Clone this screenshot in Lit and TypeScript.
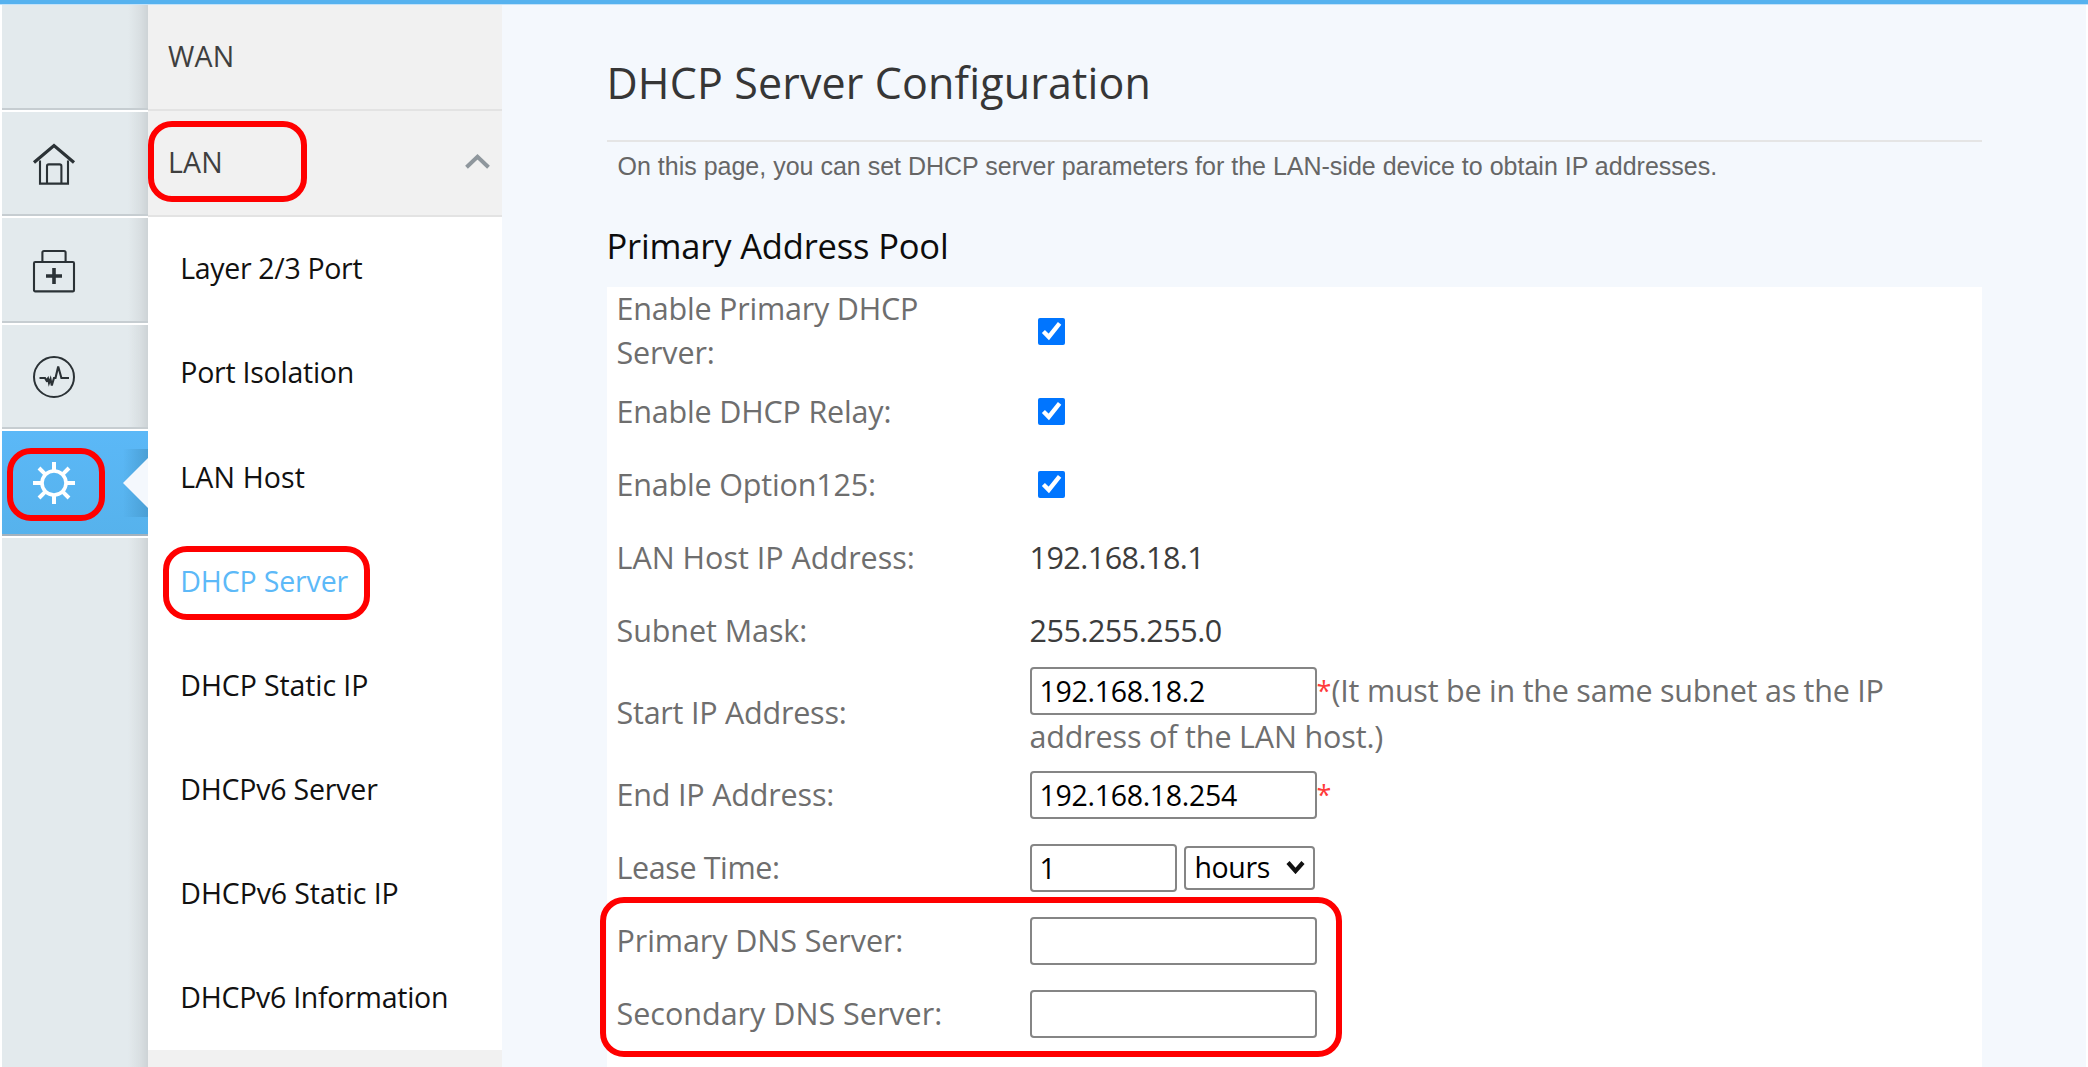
import { LitElement, html, css, svg, nothing } from "lit";
import { customElement } from "lit/decorators.js";
import { classMap } from "lit/directives/class-map.js";
import { styleMap } from "lit/directives/style-map.js";

const homeIcon = svg`<svg class="glyph" viewBox="0 0 42 42" fill="none" stroke="#2b3236">
  <path d="M1 19.5 21 2.5 41 19.5" stroke-width="3.2"/>
  <path d="M7 17.5V40.6H35V17.5" stroke-width="2.1"/>
  <path d="M14 40.6V23.2Q14 21.4 15.8 21.4H26.6Q28.4 21.4 28.4 23.2V40.6" stroke-width="2.1"/>
</svg>`;

const kitIcon = svg`<svg class="glyph" viewBox="0 0 42 42" fill="none" stroke="#2b3236" stroke-width="2.1">
  <rect x="1" y="12" width="40" height="29.4" rx="1.2"/>
  <path d="M9.4 12V2.6Q9.4 1 11 1H31Q32.6 1 32.6 2.6V12"/>
  <path d="M21 18V34M13 26H29" stroke-width="3.6"/>
</svg>`;

const pulseIcon = svg`<svg class="glyph" viewBox="0 0 42 42" fill="none" stroke="#2b3236">
  <circle cx="21" cy="21" r="20" stroke-width="2"/>
  <path d="M6.5 22H12L13.5 24.5 15 22.5 16 27 17.5 23 18.8 29.5 21 22H22.5L25.2 10.5 28.4 22H36" stroke-width="2.1"/>
</svg>`;

const gearIcon = svg`<svg class="glyph" viewBox="0 0 42 42" fill="none" stroke="#fff" stroke-width="4">
  <circle cx="21" cy="21" r="12" stroke-width="3.6"/>
  <path d="M21 0V9M21 33V42M0 21H9M33 21H42M6 6 12.4 12.4M29.6 29.6 36 36M36 6 29.6 12.4M12.4 29.6 6 36"/>
</svg>`;

const rail = [
  { icon: nothing, active: false },
  { icon: homeIcon, active: false },
  { icon: kitIcon, active: false },
  { icon: pulseIcon, active: false },
  { icon: gearIcon, active: true },
];

/* Each entry pairs the text with its letter tracking in px. */
const submenu: [string, number][] = [
  ["Layer 2/3 Port", -0.33],
  ["Port Isolation", -0.25],
  ["LAN Host", 0.15],
  ["DHCP Server", -0.15],
  ["DHCP Static IP", -0.1],
  ["DHCPv6 Server", -0.2],
  ["DHCPv6 Static IP", -0.1],
  ["DHCPv6 Information", -0.27],
];

const text = (s: string, tracking = 0) =>
  html`<span style=${styleMap({ letterSpacing: `${tracking}px` })}>${s}</span>`;

@customElement("app-root")
export class AppRoot extends LitElement {
  static styles = css`
    :host {
      display: block;
      width: 2088px;
      height: 1067px;
      overflow: hidden;
      font-family: "Open Sans", "Noto Sans", sans-serif;
      background: #fff;
    }
    * { box-sizing: border-box; }
    .page { position: relative; height: 1067px; display: flex; flex-direction: column; }
    .topbar { flex: none; height: 5px; background: #56b2ef; border-bottom: 1px solid #c3e2f9; }
    .body { flex: 1; min-height: 0; display: flex; padding: 0 2px; }

    .rail { width: 146px; flex: none; display: flex; flex-direction: column; }
    .cell {
      position: relative;
      height: 106.4px;
      flex: none;
      padding: 0 0 0 31px;
      display: flex;
      align-items: center;
      border-bottom: 2px solid #fff;
      background: linear-gradient(to right, transparent 126px, #d9dfe2 138px, #cdd3d6 146px), #e3eaed;
      box-shadow: inset 0 -2px 0 #c6cdd1;
    }
    .cell:first-child { height: 107px; }
    .cell.active {
      background: linear-gradient(#5bb8f7, #56b2ec);
      box-shadow: inset 0 -2px 0 #a4b2bd;
    }
    .cell.rest { flex: 1; border: 0; box-shadow: none; }
    .glyph { width: 42px; height: 42px; display: block; overflow: visible; }
    .notch { position: absolute; right: 0; top: 18px; width: 25px; height: 68px; }

    .menu { width: 354px; flex: none; background: #f1f1f1; font-size: 28.5px; display: flex; flex-direction: column; }
    .head {
      height: 105.5px;
      flex: none;
      display: flex;
      align-items: center;
      justify-content: space-between;
      padding: 0 12px 2px 20px;
      color: #3f3f3f;
      border-bottom: 2px solid #e3e3e3;
      letter-spacing: 0.2px;
    }
    .head + .head { height: 106.5px; }
    .chev { width: 25px; height: 15px; }
    .items { background: #fff; }
    .item { height: 104.17px; display: flex; align-items: center; padding: 0 0 1.5px 32.3px; color: #111; white-space: nowrap; }
    .item.on { color: #5cb9f8; }

    .main { flex: 1; background: #f4f8fd; padding: 0 104.5px 0 104.5px; display: flex; flex-direction: column; }
    .title { height: 137px; padding-top: 42.5px; line-height: 70px; font-size: 43px; letter-spacing: 0.14px; color: #363636; border-bottom: 2px solid #e5e5e5; white-space: nowrap; }
    .desc { height: 67px; padding: 4px 0 0 11px; font: 25px/40px "Liberation Sans", Arial, sans-serif; color: #666; white-space: nowrap; }
    .sub { height: 78px; line-height: 73px; font-size: 34.5px; letter-spacing: -0.17px; color: #0c0c0c; white-space: nowrap; }
    .form { flex: 1; background: #fff; font-size: 30.5px; color: #6e6e6e; }
    .row { height: 73px; display: grid; grid-template-columns: 423px 1fr; align-items: center; line-height: 43.7px; white-space: nowrap; }
    .row.first { height: 88px; }
    .row.start { height: 91.5px; }
    .label { padding-left: 10px; }
    .check { display: block; width: 27px; height: 27px; margin: 0 0 0 8px; }
    .val { color: #3c3c3c; }
    .line { display: flex; align-items: center; height: 48px; }
    .box {
      width: 287px; height: 48px; margin: 0; padding: 0 8px 1px;
      font: 28.5px "Open Sans", "Noto Sans", sans-serif; letter-spacing: -0.3px; color: #000; background: #fff;
      border: 2px solid #858585; border-radius: 4px; outline: 0;
    }
    .short { width: 147px; }
    .star { width: 15px; color: #ff3b3b; font-size: 27px; }
    .pick {
      width: 131px; height: 44px; margin-left: 7px; padding: 0 8px 0 9px;
      display: flex; align-items: center; justify-content: space-between;
      border: 2px solid #858585; border-radius: 4px; color: #000; font-size: 28.5px; background: #fff;
    }
    .arrow { width: 19px; height: 14px; margin-bottom: 3px; }

    .mark { position: absolute; border: 6px solid #f00; border-radius: 24px; pointer-events: none; }
    .mark-lan { left: 148px; top: 121px; width: 159px; height: 81px; }
    .mark-gear { left: 7px; top: 448px; width: 98px; height: 73px; }
    .mark-dhcp { left: 163px; top: 546px; width: 207px; height: 74px; }
    .mark-dns { left: 600px; top: 897px; width: 742px; height: 160px; }
  `;

  render() {
    return html`
      <div class="page">
        <div class="topbar"></div>
        <div class="body">
          <nav class="rail">
            ${rail.map(
              (r) => html`<div class=${classMap({ cell: true, active: r.active })}>
                ${r.icon}
                ${r.active
                  ? html`<svg class="notch" viewBox="0 0 25 68">
                      <defs><linearGradient id="sh"><stop offset="0" stop-color="#4a9fd5" stop-opacity="0"/><stop offset="1" stop-color="#4a9fd5"/></linearGradient></defs>
                      <rect width="25" height="68" fill="url(#sh)"/>
                      <path d="M25 9V59L0 34Z" fill="#f4f8fd"/>
                    </svg>`
                  : nothing}
              </div>`
            )}
            <div class="cell rest"></div>
          </nav>
          <aside class="menu">
            <div class="head"><span>WAN</span></div>
            <div class="head">
              <span>LAN</span>
              <svg class="chev" viewBox="0 0 25 15"><path d="M1.5 13.2 12.5 2.8 23.5 13.2" fill="none" stroke="#8f979d" stroke-width="4"/></svg>
            </div>
            <div class="items">
              ${submenu.map(([s, t]) => html`<div class=${classMap({ item: true, on: s === "DHCP Server" })}>${text(s, t)}</div>`)}
            </div>
          </aside>
          <main class="main">
            <div class="title">DHCP Server Configuration</div>
            <div class="desc">On this page, you can set DHCP server parameters for the LAN-side device to obtain IP addresses.</div>
            <div class="sub">Primary Address Pool</div>
            <div class="form">
              <div class="row first">
                <div class="label">${text("Enable Primary DHCP", -0.2)}<br />${text("Server:", -0.15)}</div>
                <input class="check" type="checkbox" checked />
              </div>
              <div class="row"><div class="label">${text("Enable DHCP Relay:", -0.18)}</div><input class="check" type="checkbox" checked /></div>
              <div class="row"><div class="label">${text("Enable Option125:", -0.18)}</div><input class="check" type="checkbox" checked /></div>
              <div class="row"><div class="label">${text("LAN Host IP Address:")}</div><div class="val">${text("192.168.18.1", -0.52)}</div></div>
              <div class="row"><div class="label">${text("Subnet Mask:", -0.08)}</div><div class="val">${text("255.255.255.0", -0.48)}</div></div>
              <div class="row start">
                <div class="label">${text("Start IP Address:", -0.23)}</div>
                <div>
                  <div class="line"><input class="box" value="192.168.18.2" /><span class="star">*</span>${text("(It must be in the same subnet as the IP", -0.23)}</div>
                  <div>${text("address of the LAN host.)", -0.16)}</div>
                </div>
              </div>
              <div class="row"><div class="label">${text("End IP Address:", -0.18)}</div><div class="line"><input class="box" value="192.168.18.254" /><span class="star">*</span></div></div>
              <div class="row">
                <div class="label">${text("Lease Time:", -0.4)}</div>
                <div class="line">
                  <input class="box short" value="1" />
                  <div class="pick">${text("hours", -0.4)}<svg class="arrow" viewBox="0 0 19 14"><path d="M2 2.5 9.5 11 17 2.5" fill="none" stroke="#111" stroke-width="4.2"/></svg></div>
                </div>
              </div>
              <div class="row"><div class="label">${text("Primary DNS Server:", -0.08)}</div><div class="line"><input class="box" /></div></div>
              <div class="row"><div class="label">${text("Secondary DNS Server:")}</div><div class="line"><input class="box" /></div></div>
            </div>
          </main>
        </div>
        <div class="mark mark-lan"></div>
        <div class="mark mark-gear"></div>
        <div class="mark mark-dhcp"></div>
        <div class="mark mark-dns"></div>
      </div>
    `;
  }
}
